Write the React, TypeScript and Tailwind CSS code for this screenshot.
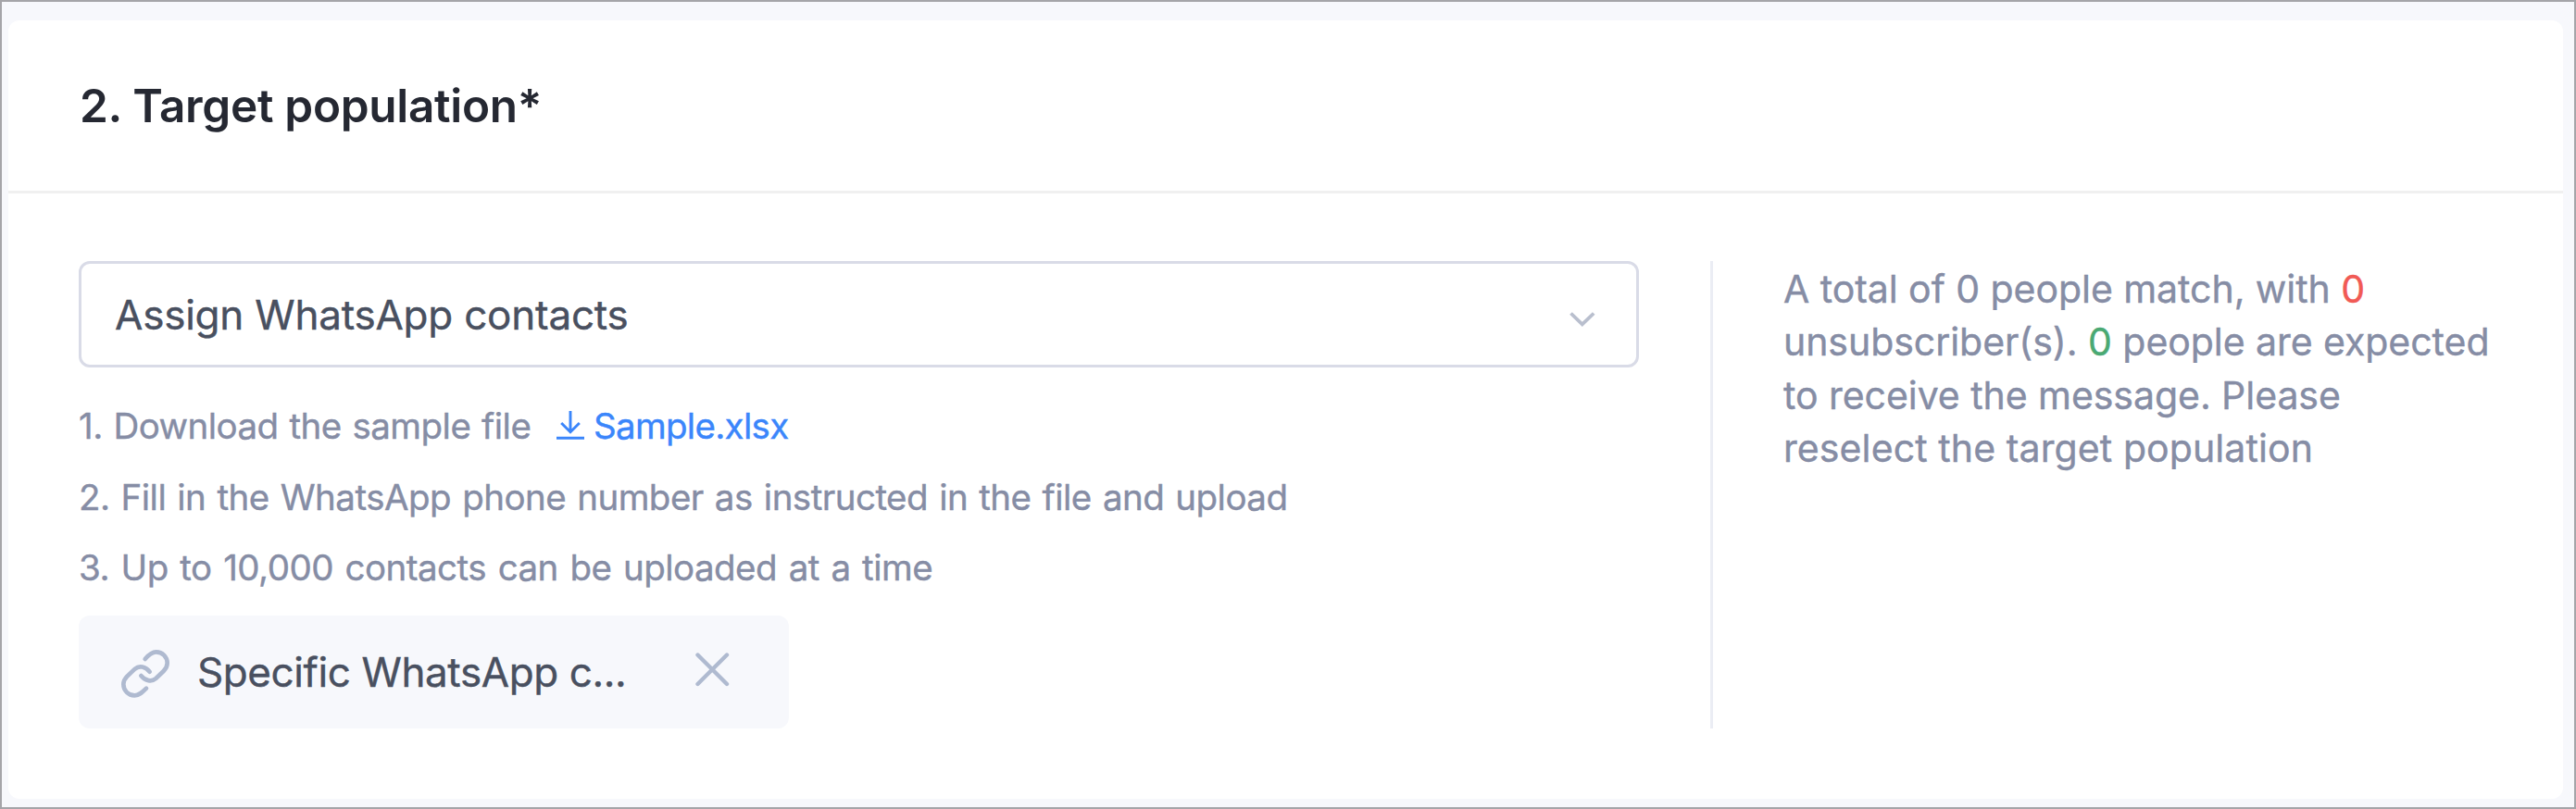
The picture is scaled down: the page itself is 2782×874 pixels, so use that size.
import React from "react";

function ChevronDown() {
  return (
    <svg className="block h-[18px] w-[28px]" viewBox="0 0 28 18" fill="none" stroke="#b9bfce" strokeWidth="3.8">
      <path d="M1.5 2.5 13.8 14.4 26.2 2.5" />
    </svg>
  );
}

function DownloadIcon() {
  return (
    <svg className="block h-[32px] w-[30px]" viewBox="0 0 30 32" fill="none" stroke="#3b86fb" strokeWidth="2.9">
      <path d="M15 0V23.5M5.2 13 15 22.8 24.8 13M0 29.3H30" />
    </svg>
  );
}

function LinkIcon() {
  return (
    <svg className="block h-[52px] w-[52px]" viewBox="0 0 156 156" fill="none" stroke="#afbad0" strokeWidth="14" strokeLinecap="round">
      <path d="M77 30C87 18 98 7 113 7C133 7 149 23 149 43C149 55 144 62 137 69L112 93C98 105 78 101 64 84" />
      <path d="M81 125C69 137 58 148 43 148C23 148 7 132 7 112C7 100 12 93 19 86L44 62C58 50 78 54 92 71" />
    </svg>
  );
}

function CloseIcon() {
  return (
    <svg className="block h-[37px] w-[37px]" viewBox="0 0 37 37" fill="none" stroke="#afbad0" strokeWidth="4.4" strokeLinecap="round">
      <path d="M2.5 2.5 34 34M34 2.5 2.5 34" />
    </svg>
  );
}

export default function App() {
  return (
    <div className="flex h-[874px] w-[2782px] flex-col border-2 border-[#a5a5a9] bg-[#f7f8fc] pt-[20px] pr-[12px] pb-[9px] pl-[7px] font-['Inter',sans-serif] font-normal">
      <section className="flex flex-1 flex-col rounded-[12px] bg-white">
        <header className="flex h-[187px] items-center border-b-[3px] border-[#f0f0f0] pl-[77px]">
          <h2 className="text-[49.5px] leading-[60px] font-semibold tracking-[-0.3px] whitespace-nowrap text-[#252832]">2. Target population*</h2>
        </header>

        <div className="flex pt-[73px] pl-[76px] [-webkit-text-stroke:0.4px]">
          <div className="flex w-[1685px] flex-col">
            <button
              type="button"
              className="flex h-[115px] items-center justify-between rounded-[12px] border-[3px] border-[#d9dbe7] pr-[44px] pl-[36px]"
            >
              <span className="text-[44px] leading-[56px] tracking-[-0.22px] whitespace-nowrap text-[#495060]">
                Assign WhatsApp contacts
              </span>
              <span className="pt-[11px]">
                <ChevronDown />
              </span>
            </button>

            <ol className="mt-[25px] text-[38.5px] leading-[76.5px] tracking-[-0.53px] whitespace-nowrap text-[#868da5]">
              <li className="flex h-[76.5px] items-center">
                <span className="w-[488px] [word-spacing:1.5px]">1. Download the sample file</span>
                <a className="ml-[28px] flex items-center gap-[10px] text-[#3b86fb]">
                  <DownloadIcon />
                  <span className="tracking-[-0.7px]">Sample.xlsx</span>
                </a>
              </li>
              <li className="[word-spacing:1.8px]">2. Fill in the WhatsApp phone number as instructed in the file and upload</li>
              <li className="[word-spacing:2.3px]">3. Up to 10,000 contacts can be uploaded at a time</li>
            </ol>

            <div className="mt-[13.5px] flex h-[122px] w-[767px] items-center rounded-[12px] bg-[#f7f8fc] pl-[46px]">
              <span className="pt-[3px]">
                <LinkIcon />
              </span>
              <span className="ml-[30px] w-[538px] text-[44px] leading-[56px] tracking-[-0.4px] whitespace-nowrap text-[#495060]">
                Specific WhatsApp c...
              </span>
              <span className="pb-[6px]">
                <CloseIcon />
              </span>
            </div>
          </div>

          <div className="ml-[77px] w-[3px] bg-[#ebedf4]" />

          <p className="ml-[76px] pt-[2px] text-[41px] leading-[57.4px] tracking-[-0.05px] whitespace-nowrap text-[#868da5]">
            A total of 0 people match, with <span className="text-[#f15a55]">0</span>
            <br />
            unsubscriber(s). <span className="text-[#4aa973]">0</span> people are expected
            <br />
            to receive the message. Please
            <br />
            <span className="tracking-[0.1px]">reselect the target population</span>
          </p>
        </div>
      </section>
    </div>
  );
}
